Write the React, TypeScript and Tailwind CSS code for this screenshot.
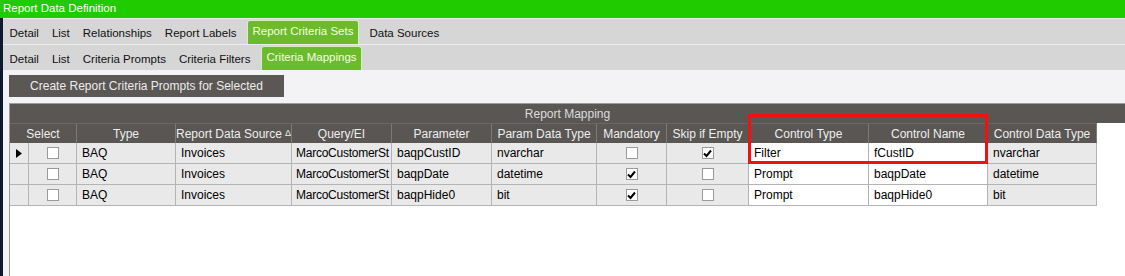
import React from "react";

const FONT = { fontFamily: '"Liberation Sans", Arial, sans-serif' };

const TABS1 = ["Detail", "List", "Relationships", "Report Labels", "Report Criteria Sets", "Data Sources"];
const TABS2 = ["Detail", "List", "Criteria Prompts", "Criteria Filters", "Criteria Mappings"];

// column widths include the 1px right divider
const COLS = [
  { key: "ind", label: "", w: 19 },
  { key: "sel", label: "Select", w: 48 },
  { key: "type", label: "Type", w: 99 },
  { key: "rds", label: "Report Data Source", w: 116 },
  { key: "query", label: "Query/EI", w: 100 },
  { key: "param", label: "Parameter", w: 100 },
  { key: "ptype", label: "Param Data Type", w: 105 },
  { key: "mand", label: "Mandatory", w: 70 },
  { key: "skip", label: "Skip if Empty", w: 82 },
  { key: "ctype", label: "Control Type", w: 120 },
  { key: "cname", label: "Control Name", w: 119 },
  { key: "cdtype", label: "Control Data Type", w: 109 },
];

const ROWS = [
  { param: "baqpCustID", ptype: "nvarchar", mand: false, skip: true, ctype: "Filter", cname: "fCustID", cdtype: "nvarchar" },
  { param: "baqpDate", ptype: "datetime", mand: true, skip: false, ctype: "Prompt", cname: "baqpDate", cdtype: "datetime" },
  { param: "baqpHide0", ptype: "bit", mand: true, skip: false, ctype: "Prompt", cname: "baqpHide0", cdtype: "bit" },
];

function TabRow({ tabs, active }: { tabs: string[]; active: string }) {
  return (
    <div className="flex h-[25px] items-end bg-[#d6d6d6] text-[11.5px] text-[#111]">
      {tabs.map((t) =>
        t === active ? (
          <div
            key={t}
            className="mx-[4px] flex h-[24px] items-center rounded-t-[3px] border border-b-0 border-[#d4efb8] bg-[#6cbb2c] px-[4.5px] pb-[2px] text-[#f4fbe8]"
          >
            {t}
          </div>
        ) : (
          <div key={t} className="flex h-[25px] items-center px-[6.5px] pt-[5px]">
            {t}
          </div>
        ),
      )}
    </div>
  );
}

function Check({ on }: { on: boolean }) {
  return (
    <span className="flex h-[12px] w-[12px] items-center justify-center border border-[#9a9a9a] bg-white">
      {on && (
        <svg width="9" height="9" viewBox="0 0 9 9">
          <path d="M1 4.5 L3.5 7 L8 1.5" fill="none" stroke="#000" strokeWidth="2" />
        </svg>
      )}
    </span>
  );
}

function Cell({ w, white, children, center }: { w: number; white?: boolean; children?: React.ReactNode; center?: boolean }) {
  return (
    <div
      style={{ width: w }}
      className={`flex h-[21px] shrink-0 items-center overflow-hidden whitespace-nowrap border-r border-b border-[#b4b4b4] ${
        white ? "bg-white" : "bg-[#e9e9e9]"
      } ${center ? "justify-center" : "pl-[5px]"}`}
    >
      {children}
    </div>
  );
}

export default function App() {
  return (
    <div className="h-[276px] w-[1125px] overflow-hidden bg-[#f3f3f6]" style={FONT}>
      <div className="flex h-[18px] items-center bg-[#20cc00] pl-[3px] text-[11.5px] text-white">Report Data Definition</div>
      <div className="flex h-[258px]">
        <div className="w-[3px] shrink-0 bg-[#0c1b2c]" />
        <div className="flex min-w-0 flex-1 flex-col">
          <div className="h-px bg-[#ececec]" />
          <TabRow tabs={TABS1} active="Report Criteria Sets" />
          <div className="h-px bg-[#ececec]" />
          <TabRow tabs={TABS2} active="Criteria Mappings" />
          <div className="px-[6px] pt-[5px]">
            <button className="flex h-[22px] w-[275px] items-center justify-center bg-[#5a5754] text-[12px] text-[#ececec]">
              Create Report Criteria Prompts for Selected
            </button>
          </div>
          <div className="relative ml-[6px] mt-[6px] flex-1 border-l border-t border-[#9c9c9c] bg-white">
            <div className="flex h-[19px] items-center justify-center bg-[#595653] text-[12px] text-[#dcdcdc]">
              Report Mapping
            </div>
            <div className="flex">
              <div className="flex h-[20px] shrink-0 bg-[#595653] text-[12px] text-[#eeeeee]">
                {COLS.slice(1).map((c, i) => (
                  <div
                    key={c.key}
                    style={{ width: i === 0 ? c.w + COLS[0].w : c.w }}
                    className="flex items-center justify-center whitespace-nowrap border-r border-t border-[#7c7a77] border-t-[#6a6865]"
                  >
                    {c.label}
                    {c.key === "rds" && <span className="ml-[3px] text-[9px] leading-none">&#916;</span>}
                  </div>
                ))}
              </div>
            </div>
            <div className="text-[12px] text-black">
              {ROWS.map((r, i) => (
                <div key={r.param} className="flex">
                  <Cell w={19} center>
                    {i === 0 && (
                      <svg width="6" height="9" viewBox="0 0 6 9">
                        <path d="M0 0 L6 4.5 L0 9 Z" fill="#000" />
                      </svg>
                    )}
                  </Cell>
                  <Cell w={48} center>
                    <Check on={false} />
                  </Cell>
                  <Cell w={99}>BAQ</Cell>
                  <Cell w={116}>Invoices</Cell>
                  <Cell w={100}>
                    <span className="-ml-px tracking-[-0.25px]">MarcoCustomerSt</span>
                  </Cell>
                  <Cell w={100}>{r.param}</Cell>
                  <Cell w={105}>{r.ptype}</Cell>
                  <Cell w={70} center>
                    <Check on={r.mand} />
                  </Cell>
                  <Cell w={82} center>
                    <Check on={r.skip} />
                  </Cell>
                  <Cell w={120} white>
                    {r.ctype}
                  </Cell>
                  <Cell w={119} white>
                    {r.cname}
                  </Cell>
                  <Cell w={109}>{r.cdtype}</Cell>
                </div>
              ))}
            </div>
            <div className="absolute left-[738px] top-[10px] h-[50px] w-[240px] border-[3px] border-[#f21010]" />
          </div>
        </div>
      </div>
    </div>
  );
}
